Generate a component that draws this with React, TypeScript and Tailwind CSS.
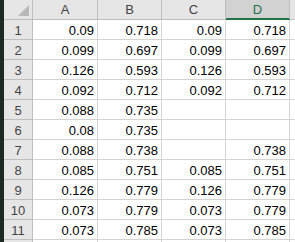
import React from "react";

const rows: string[][] = [
  ["0.09", "0.718", "0.09", "0.718"],
  ["0.099", "0.697", "0.099", "0.697"],
  ["0.126", "0.593", "0.126", "0.593"],
  ["0.092", "0.712", "0.092", "0.712"],
  ["0.088", "0.735", "", ""],
  ["0.08", "0.735", "", ""],
  ["0.088", "0.738", "", "0.738"],
  ["0.085", "0.751", "0.085", "0.751"],
  ["0.126", "0.779", "0.126", "0.779"],
  ["0.073", "0.779", "0.073", "0.779"],
  ["0.073", "0.785", "0.073", "0.785"],
  ["", "", "", ""],
];

const widths = ["w-[65px]", "w-[64px]", "w-[64px]", "w-[64px]"];
const letters = ["A", "B", "C", "D"];

const App = () => {
  return (
    <div className="flex w-[295px] h-[242px] overflow-hidden bg-white font-['Liberation_Sans',Arial,sans-serif] text-[13px]">
      {/* dark window edge */}
      <div className="w-[4px] shrink-0 bg-[#1d2a22]" />

      <div className="flex flex-col">
        {/* Column headers */}
        <div className="flex h-[20px] shrink-0">
          <div className="relative w-[29px] shrink-0 bg-[#e6e6e6] border-r border-b border-[#bfbfbf]">
            <div className="absolute right-[3px] bottom-[3px] w-0 h-0 border-l-[11px] border-l-transparent border-b-[11px] border-b-[#b8b8b8]" />
          </div>
          {letters.map((l, i) =>
            l === "D" ? (
              <div
                key={l}
                className={`${widths[i]} shrink-0 flex items-center justify-center bg-[#d2d2d2] border-r border-[#bfbfbf] border-b-2 border-b-[#217346] text-[#217346] leading-none pt-[1px]`}
              >
                {l}
              </div>
            ) : (
              <div
                key={l}
                className={`${widths[i]} shrink-0 flex items-center justify-center bg-[#e6e6e6] border-r border-b border-[#bfbfbf] text-[#444444] leading-none`}
              >
                {l}
              </div>
            )
          )}
          <div className="w-[10px] shrink-0 bg-[#e6e6e6] border-b border-[#bfbfbf]" />
        </div>

        {/* Data rows */}
        {rows.map((r, ri) => (
          <div key={ri} className="flex h-[20px] shrink-0">
            <div className="w-[29px] shrink-0 flex items-center justify-center bg-[#e6e6e6] border-r border-b border-[#bfbfbf] text-[#444444] leading-none pt-[1px]">
              {ri < 11 ? ri + 1 : ""}
            </div>
            {r.map((v, ci) => (
              <div
                key={ci}
                className={`${widths[ci]} shrink-0 flex items-end justify-end pr-[3px] pb-[2px] border-r border-b border-[#d4d4d4] text-black leading-none`}
              >
                {v}
              </div>
            ))}
            <div className="w-[10px] shrink-0 border-b border-[#d4d4d4]" />
          </div>
        ))}
      </div>
    </div>
  );
};

export default App;
